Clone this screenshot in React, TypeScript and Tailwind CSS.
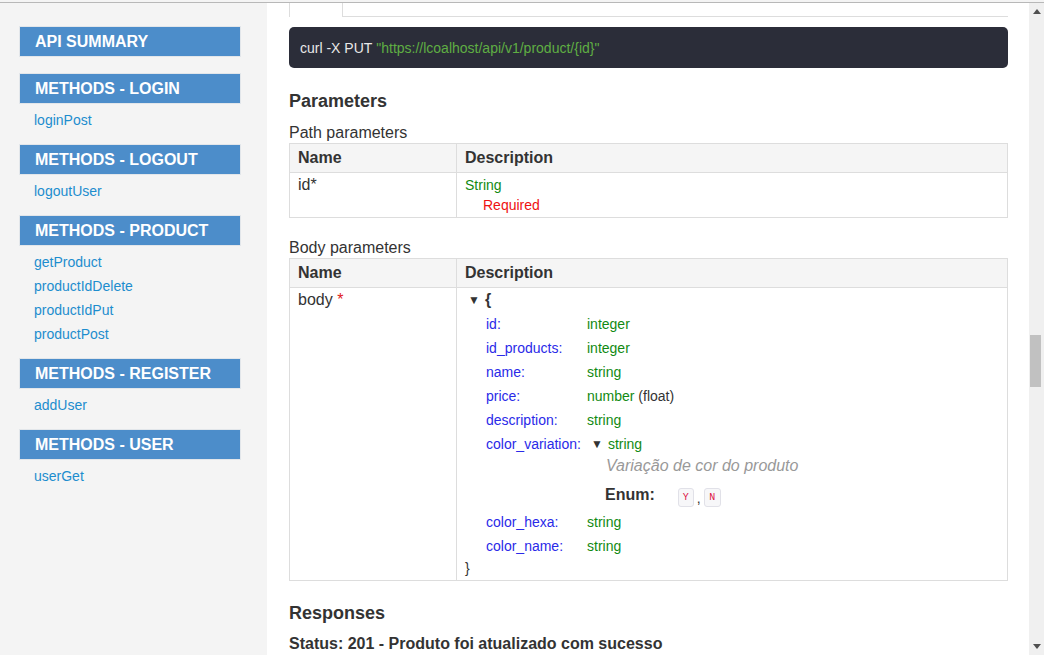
import React from "react";

const groups: { title: string; links: string[] }[] = [
  { title: "API SUMMARY", links: [] },
  { title: "METHODS - LOGIN", links: ["loginPost"] },
  { title: "METHODS - LOGOUT", links: ["logoutUser"] },
  { title: "METHODS - PRODUCT", links: ["getProduct", "productIdDelete", "productIdPut", "productPost"] },
  { title: "METHODS - REGISTER", links: ["addUser"] },
  { title: "METHODS - USER", links: ["userGet"] },
];

const fields: [string, string][] = [
  ["id:", "integer"],
  ["id_products:", "integer"],
  ["name:", "string"],
  ["price:", "number"],
  ["description:", "string"],
];

function Key({ k }: { k: string }) {
  return <div className="w-[101px] shrink-0 text-[#2a2ae8]">{k}</div>;
}

export default function App() {
  return (
    <div
      className="w-[1044px] h-[655px] overflow-hidden flex flex-col bg-white text-[#333]"
      style={{ fontFamily: '"Liberation Sans", Arial, sans-serif' }}
    >
      <div className="h-[2px] bg-[#f4f4f4] shrink-0" />
      <div className="h-px bg-[#b8b8b8] shrink-0" />
      <div className="flex flex-1 min-h-0">
        {/* Sidebar */}
        <aside className="w-[267px] shrink-0 bg-[#f4f4f4] pl-[19px] pt-[23px]">
          {groups.map((g) => (
            <div key={g.title} className={g.links.length ? "mb-[12px]" : "mb-[16px]"}>
              <div className="w-[222px] h-[31px] border border-[#e2e6ea] bg-[#4c8dca] text-white font-bold text-[16px] leading-[29px] pl-[15px]">
                {g.title}
              </div>
              {g.links.length > 0 && (
                <div className="mt-[4px] pl-[15px]">
                  {g.links.map((l) => (
                    <div key={l} className="text-[14px] leading-[24px] text-[#1d8dce]">
                      {l}
                    </div>
                  ))}
                </div>
              )}
            </div>
          ))}
        </aside>

        {/* Main */}
        <main className="w-[762px] shrink-0 pl-[22px] pr-[21px]">
          <div className="flex h-[14px]">
            <div className="w-[54px] border-x border-[#dddddd]" />
            <div className="flex-1 border-b border-[#dddddd]" />
          </div>

          <div className="mt-[10px] h-[41px] rounded-[5px] bg-[#2b2d39] px-[11px] pt-px flex items-center text-[14px] text-[#e8e8e8]">
            curl -X PUT&nbsp;<span className="text-[#5fae43]">"https://lcoalhost/api/v1/product/{"{id}"}"</span>
          </div>

          <h3 className="mt-[23px] text-[18px] leading-[20px] font-bold">Parameters</h3>

          <div className="mt-[12px] text-[16px] leading-[20px]">Path parameters</div>
          <table className="w-full border-collapse text-[16px]">
            <thead>
              <tr className="bg-[#f5f5f5]">
                <th className="w-[167px] border border-[#dddddd] text-left font-bold px-[8px] h-[29px] leading-[20px]">Name</th>
                <th className="border border-[#dddddd] text-left font-bold px-[8px] leading-[20px]">Description</th>
              </tr>
            </thead>
            <tbody>
              <tr>
                <td className="border border-[#dddddd] align-top px-[8px] pt-[2px] h-[45px] leading-[20px]">id*</td>
                <td className="border border-[#dddddd] align-top px-[8px] pt-[2px] pb-px text-[14px] leading-[20px]">
                  <div className="text-[#128a12]">String</div>
                  <div className="pl-[18px] text-[#ee1111]">Required</div>
                </td>
              </tr>
            </tbody>
          </table>

          <div className="mt-[20px] text-[16px] leading-[20px]">Body parameters</div>
          <table className="w-full border-collapse text-[16px]">
            <thead>
              <tr className="bg-[#f5f5f5]">
                <th className="w-[167px] border border-[#dddddd] text-left font-bold px-[8px] h-[29px] leading-[20px]">Name</th>
                <th className="border border-[#dddddd] text-left font-bold px-[8px] leading-[20px]">Description</th>
              </tr>
            </thead>
            <tbody>
              <tr>
                <td className="border border-[#dddddd] align-top px-[8px] pt-[2px] leading-[20px]">
                  body <span className="text-[#e02020]">*</span>
                </td>
                <td className="border border-[#dddddd] align-top px-[8px] pt-[2px] pb-[2px] text-[14px]">
                  <div className="leading-[20px] font-bold text-[16px] flex items-center">
                    <span className="ml-[3px] mr-[5px] text-[12px] text-[#333]">▼</span>
                    {"{"}
                  </div>
                  <div className="mt-[2px] pl-[21px]">
                    {fields.map(([k, v]) => (
                      <div key={k} className="flex leading-[24px]">
                        <Key k={k} />
                        <div className="text-[#128a12]">
                          {v}
                          {k === "price:" && <span className="text-[#333]"> (float)</span>}
                        </div>
                      </div>
                    ))}
                    <div className="flex leading-[24px]">
                      <Key k="color_variation:" />
                      <div>
                        <div className="flex items-center">
                          <span className="ml-[4px] mr-[5px] text-[12px] text-[#333]">▼</span>
                          <span className="text-[#128a12]">string</span>
                        </div>
                        <div className="pl-[19px] italic text-[16px] text-[#999999] leading-[20px]">
                          Variação de cor do produto
                        </div>
                        <div className="pl-[18px] pt-[7px] h-[34px] flex items-start">
                          <span className="font-bold text-[16px] leading-[24px]">Enum:</span>
                          <span className="ml-[23px] mt-[5px] flex items-center">
                            <span
                              className="w-[16px] h-[19px] flex items-center justify-center rounded-[3px] border border-[#e1e1e8] bg-[#f7f7f9] text-[#d14] text-[10px] leading-none"
                              style={{ fontFamily: '"Liberation Mono", monospace' }}
                            >
                              Y
                            </span>
                            <span className="mx-[3px] leading-none">,</span>
                            <span
                              className="w-[17px] h-[19px] flex items-center justify-center rounded-[3px] border border-[#e1e1e8] bg-[#f7f7f9] text-[#d14] text-[10px] leading-none"
                              style={{ fontFamily: '"Liberation Mono", monospace' }}
                            >
                              N
                            </span>
                          </span>
                        </div>
                      </div>
                    </div>
                    <div className="flex leading-[24px]">
                      <Key k="color_hexa:" />
                      <div className="text-[#128a12]">string</div>
                    </div>
                    <div className="flex leading-[24px]">
                      <Key k="color_name:" />
                      <div className="text-[#128a12]">string</div>
                    </div>
                  </div>
                  <div className="leading-[20px]">{"}"}</div>
                </td>
              </tr>
            </tbody>
          </table>

          <h3 className="mt-[22px] text-[18px] leading-[20px] font-bold">Responses</h3>
          <div className="mt-[11px] text-[16px] leading-[20px] font-bold">
            Status: 201 - Produto foi atualizado com sucesso
          </div>
        </main>

        {/* Scrollbar */}
        <div className="w-[15px] shrink-0 bg-[#f0f0f0] flex flex-col items-center">
          <div className="h-[17px] flex items-center justify-center">
            <svg width="8" height="5" viewBox="0 0 8 5">
              <path d="M0 5 L4 0 L8 5 Z" fill="#505050" />
            </svg>
          </div>
          <div className="flex-1 w-full relative">
            <div className="mt-[315px] ml-[1px] w-[11px] h-[52px] bg-[#c1c1c1]" />
          </div>
          <div className="h-[17px] flex items-center justify-center">
            <svg width="8" height="5" viewBox="0 0 8 5">
              <path d="M0 0 L8 0 L4 5 Z" fill="#505050" />
            </svg>
          </div>
        </div>
      </div>
    </div>
  );
}
